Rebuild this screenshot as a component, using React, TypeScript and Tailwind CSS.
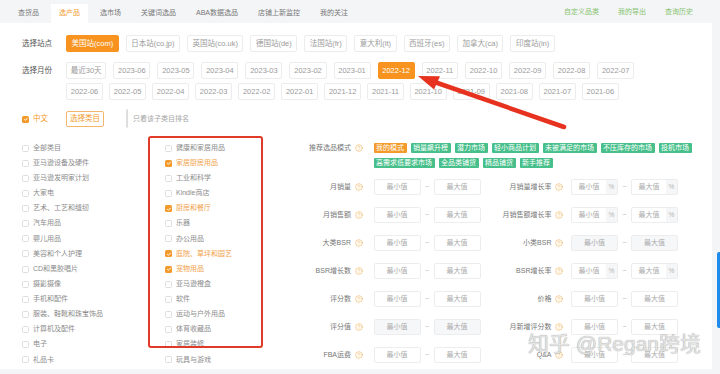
import { CircleHelp } from 'lucide-react'

const TABS = ['查货品', '选产品', '选市场', '关键词选品', 'ABA数据选品', '店铺上新监控', '我的关注']
const LINKS = ['自定义品类', '我的导出', '查询历史']
const SITES = ['美国站(com)', '日本站(co.jp)', '英国站(co.uk)', '德国站(de)', '法国站(fr)', '意大利(it)', '西班牙(es)', '加拿大(ca)', '印度站(in)']
const MONTHS_A = ['最近30天', '2023-06', '2023-05', '2023-04', '2023-03', '2023-02', '2023-01', '2022-12', '2022-11', '2022-10', '2022-09', '2022-08', '2022-07']
const MONTHS_B = ['2022-06', '2022-05', '2022-04', '2022-03', '2022-02', '2022-01', '2021-12', '2021-11', '2021-10', '2021-09', '2021-08', '2021-07', '2021-06']

const CATS_LEFT = ['全部类目', '亚马逊设备及硬件', '亚马逊发明家计划', '大家电', '艺术、工艺和缝纫', '汽车用品', '婴儿用品', '美容和个人护理', 'CD和黑胶唱片', '摄影摄像', '手机和配件', '服装、鞋靴和珠宝饰品', '计算机及配件', '电子', '礼品卡', '食品杂货']
const CATS_MID = ['健康和家居用品', '家居厨房用品', '工业和科学', 'Kindle商店', '厨房和餐厅', '乐器', '办公用品', '庭院、草坪和园艺', '宠物用品', '亚马逊橙盒', '软件', '运动与户外用品', '体育收藏品', '家居装修', '玩具与游戏', '视频游戏']
const CHECKED_MID = ['家居厨房用品', '厨房和餐厅', '庭院、草坪和园艺', '宠物用品']

const TAGS = ['我的模式', '销量飙升榜', '潜力市场', '轻小商品计划', '未被满足的市场', '不压库存的市场', '投机市场', '高需求低要求市场', '全品类铺货', '精品铺货', '新手推荐']

const FILTERS = [
  { left: '月销量', right: '月销量增长率', pct: true },
  { left: '月销售额', right: '月销售额增长率', pct: true },
  { left: '大类BSR', right: '小类BSR', muted: true },
  { left: 'BSR增长数', right: 'BSR增长率', pct: true },
  { left: '评分数', right: '价格' },
  { left: '评分值', right: '月新增评分数' },
  { left: 'FBA运费', right: 'Q&A' },
]

function Box({ on }: { on?: boolean }) {
  if (on) {
    return (
      <span className="flex size-[7px] shrink-0 items-center justify-center rounded-[1.5px] bg-[#f39a2b]">
        <svg viewBox="0 0 8 8" className="size-[6px]">
          <path d="M1.6 4.1 3.3 5.7 6.4 2.4" fill="none" stroke="#fff" strokeWidth="1.3" />
        </svg>
      </span>
    )
  }
  return <span className="size-[7px] shrink-0 rounded-[1.5px] border border-[#dedede] bg-white" />
}

function Chip({ label, active, tight }: { label: string; active?: boolean; tight?: boolean }) {
  return (
    <span
      className={`flex h-[17px] items-center whitespace-nowrap rounded-[2px] border text-[7.5px] ${
        tight ? 'px-[3.75px]' : 'px-[4.5px]'
      } ${active ? 'border-[#f7931e] bg-[#f7931e] text-white' : 'border-[#ececec] bg-white text-[#9a9a9a]'}`}
    >
      {label}
    </span>
  )
}

function Help() {
  return <CircleHelp className="ml-[3.5px] size-[8px] shrink-0 text-[#f0b04f]" strokeWidth={1.7} />
}

function Field({ text, pct, muted }: { text: string; pct?: boolean; muted?: boolean }) {
  return (
    <div
      className={`flex h-[16px] w-[47px] overflow-hidden rounded-[2px] border border-[#ededed] ${
        muted ? 'bg-[#f6f7f9]' : 'bg-white'
      }`}
    >
      <span className="flex flex-1 items-center justify-center text-[7px] text-[#ababab]">{text}</span>
      {pct && (
        <span className="flex w-[11px] items-center justify-center bg-[#f5f6f7] text-[6.5px] text-[#b5b5b5]">%</span>
      )}
    </div>
  )
}

function Range({ pct, muted }: { pct?: boolean; muted?: boolean }) {
  return (
    <>
      <Field text="最小值" pct={pct} muted={muted} />
      <span className="w-[13px] text-center text-[7px] text-[#bbb]">~</span>
      <Field text="最大值" pct={pct} muted={muted} />
    </>
  )
}

function CategoryList({ items, checked = [] }: { items: string[]; checked?: string[] }) {
  return (
    <div className="flex flex-col">
      {items.map((c) => {
        const on = checked.includes(c)
        return (
          <div key={c} className="flex h-[15.13px] items-center gap-[4px]">
            <Box on={on} />
            <span className={`whitespace-nowrap text-[7px] ${on ? 'text-[#f2a14a]' : 'text-[#8c8c8c]'}`}>{c}</span>
          </div>
        )
      })}
    </div>
  )
}

export default function App() {
  return (
    <div className="relative h-[374px] w-[720px] overflow-hidden bg-[#f4f5f7] font-['Liberation_Sans','Noto_Sans_CJK_SC',sans-serif]">
      {/* top tabs */}
      <header className="flex h-[23px] items-end justify-between">
        <nav className="flex gap-[4px] pl-[10px]">
          {TABS.map((t) => (
            <span
              key={t}
              className={`flex h-[19px] items-center whitespace-nowrap px-[8px] text-[7px] ${
                t === '选产品' ? 'bg-white text-[#f39a2b]' : 'text-[#777]'
              }`}
            >
              {t}
            </span>
          ))}
        </nav>
        <div className="flex h-full items-center gap-[19px] pr-[27px] pt-[2px] text-[7px] text-[#86c36f]">
          {LINKS.map((l) => (
            <span key={l}>{l}</span>
          ))}
        </div>
      </header>

      <main className="mr-[8px] h-[346px] overflow-hidden bg-white pl-[22px] pt-[12px]">
        <div className="flex h-[17px] items-center">
          <span className="w-[44px] text-[7.5px] text-[#555]">选择站点</span>
          <div className="flex gap-[7px]">
            {SITES.map((s, i) => (
              <Chip key={s} label={s} active={i === 0} />
            ))}
          </div>
        </div>

        <div className="mt-[10px] flex">
          <span className="flex h-[17px] w-[44px] items-center text-[7.5px] text-[#555]">选择月份</span>
          <div className="flex flex-col gap-[4px]">
            <div className="flex gap-[7px]">
              {MONTHS_A.map((m) => (
                <Chip key={m} label={m} active={m === '2022-12'} tight />
              ))}
            </div>
            <div className="flex gap-[6px]">
              {MONTHS_B.map((m) => (
                <Chip key={m} label={m} tight />
              ))}
            </div>
          </div>
        </div>

        <div className="mt-[11px] flex h-[16px] items-center">
          <Box on />
          <span className="ml-[4px] text-[7.5px] text-[#f39a2b]">中文</span>
          <span className="ml-[18px] flex h-[16px] items-center rounded-[2px] border border-[#f4b56c] px-[3px] text-[7.5px] text-[#f39a2b]">
            选择类目
          </span>
          <span className="ml-[22px]">
            <Box />
          </span>
          <span className="ml-[5px] text-[7px] text-[#a5a5a5]">只看该子类目排名</span>
        </div>

        <div className="mt-[13.5px] flex">
          <div className="w-[143px]">
            <CategoryList items={CATS_LEFT} />
          </div>
          <div className="w-[135px]">
            <CategoryList items={CATS_MID} checked={CHECKED_MID} />
          </div>

          <div className="flex flex-col gap-[11px] pt-[2.5px]">
            <div className="flex items-start">
              <span className="flex h-[10px] w-[51px] items-center justify-end whitespace-nowrap text-[7px] text-[#777]">
                推荐选品模式
              </span>
              <span className="flex h-[10px] items-center">
                <Help />
              </span>
              <div className="ml-[11px] flex w-[320px] flex-wrap gap-x-[4px] gap-y-[5px]">
                {TAGS.map((t, i) => (
                  <span
                    key={t}
                    className={`h-[10px] whitespace-nowrap rounded-[1px] px-[2.5px] text-[7px] leading-[10px] text-white ${
                      i === 0 ? 'bg-[#f39a2b]' : 'bg-[#47bf8a]'
                    }`}
                  >
                    {t}
                  </span>
                ))}
              </div>
            </div>

            <div className="flex flex-col gap-[12px]">
              {FILTERS.map((f) => (
                <div key={f.left} className="flex h-[16px] items-center">
                  <span className="w-[51px] whitespace-nowrap text-right text-[7px] text-[#777]">{f.left}</span>
                  <Help />
                  <span className="ml-[11px] flex items-center">
                    <Range muted={f.left === '评分值'} />
                  </span>
                  <span className="w-[71px] whitespace-nowrap text-right text-[7px] text-[#777]">{f.right}</span>
                  <Help />
                  <span className="ml-[8px] flex items-center">
                    <Range pct={f.pct} muted={f.muted} />
                  </span>
                </div>
              ))}
            </div>
          </div>
        </div>
      </main>

      {/* annotations laid over the screenshot */}
      <div className="pointer-events-none absolute left-[148px] top-[136px] h-[212px] w-[115px] rounded-[3px] border-2 border-[#e23a28]" />
      <svg className="pointer-events-none absolute left-0 top-0" width="720" height="374" viewBox="0 0 720 374">
        <line x1="564" y1="127" x2="436" y2="82.5" stroke="#e6321f" strokeWidth="4.5" strokeLinecap="round" />
        <polygon points="418,76 440,76.2 434,89.5" fill="#e6321f" />
      </svg>
      <span className="pointer-events-none absolute left-[528px] top-[328px] whitespace-nowrap text-[21px] text-[#e2e2e2] [text-shadow:0_0_1px_rgba(0,0,0,0.45)]">
        知乎 @Regan跨境
      </span>
      <div className="absolute left-[717px] top-[252px] h-[76px] w-[3px] rounded-l-[2px] bg-[#1f8ceb]" />
    </div>
  )
}
